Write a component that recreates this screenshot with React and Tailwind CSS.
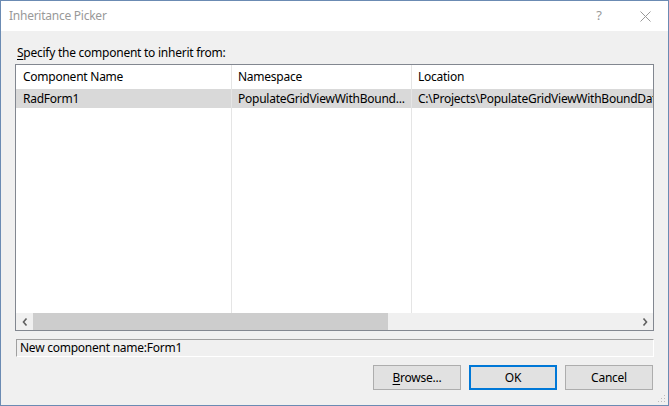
import React from "react";

const font = { fontFamily: '"Segoe UI", "Noto Sans", "Open Sans", sans-serif' };

export default function App() {
  return (
    <div
      className="relative w-[669px] h-[406px] border border-[#6b8bb3] bg-[#f0f0f0] flex flex-col text-[12px] tracking-[-0.25px] text-black overflow-hidden"
      style={font}
    >
      {/* Title bar */}
      <div className="h-[30px] bg-white flex items-center shrink-0">
        <div className="pl-[8px] text-[#999999] text-[12px] flex-1 leading-none">Inheritance Picker</div>
        <div className="w-[46px] h-[30px] flex items-center justify-center text-[#999999] text-[13px]">?</div>
        <div className="w-[46px] h-[30px] flex items-center justify-center">
          <svg width="11" height="11" viewBox="0 0 11 11">
            <path d="M0.5 0.5 L10.5 10.5 M10.5 0.5 L0.5 10.5" stroke="#999999" strokeWidth="1" />
          </svg>
        </div>
      </div>

      {/* Body */}
      <div className="flex-1 flex flex-col px-[14px]">
        <div className="pt-[14px] pl-[2px] h-[33px] leading-[16px]">
          <span className="underline underline-offset-2">S</span>pecify the component to inherit from:
        </div>

        {/* List view */}
        <div className="h-[267px] border border-[#828790] bg-white flex flex-col">
          <div className="flex-1 relative flex">
            <div className="w-[216px] border-r border-[#e5e5e5] flex flex-col">
              <div className="h-[24px] flex items-center pl-[7px]">Component Name</div>
              <div className="h-[19px] bg-[#d9d9d9] flex items-center pl-[7px]">RadForm1</div>
            </div>
            <div className="w-[180px] border-r border-[#e5e5e5] flex flex-col">
              <div className="h-[24px] flex items-center pl-[6px]">Namespace</div>
              <div className="h-[19px] bg-[#d9d9d9] flex items-center pl-[6px] whitespace-nowrap overflow-hidden">
                PopulateGridViewWithBound...
              </div>
            </div>
            <div className="flex-1 min-w-0 flex flex-col overflow-hidden">
              <div className="h-[24px] flex items-center pl-[6px]">Location</div>
              <div className="h-[19px] bg-[#d9d9d9] flex items-center pl-[6px] whitespace-nowrap overflow-hidden">
                C:\Projects\PopulateGridViewWithBoundDat
              </div>
            </div>
          </div>
          {/* horizontal scrollbar */}
          <div className="h-[17px] bg-[#f0f0f0] flex items-center shrink-0">
            <div className="w-[17px] h-[17px] flex items-center justify-center">
              <svg width="6" height="8" viewBox="0 0 6 8">
                <path d="M4.5 0.5 L1.5 4 L4.5 7.5" stroke="#606060" strokeWidth="1.6" fill="none" />
              </svg>
            </div>
            <div className="w-[355px] h-[17px] bg-[#cdcdcd]" />
            <div className="flex-1" />
            <div className="w-[17px] h-[17px] flex items-center justify-center">
              <svg width="6" height="8" viewBox="0 0 6 8">
                <path d="M1.5 0.5 L4.5 4 L1.5 7.5" stroke="#606060" strokeWidth="1.6" fill="none" />
              </svg>
            </div>
          </div>
        </div>

        {/* text box */}
        <div className="mt-[8px] ml-[1px] h-[18px] border-t border-l border-[#a0a0a0] border-b border-r border-b-white border-r-white flex items-center pl-[3px]">
          New component name:Form1
        </div>

        {/* buttons */}
        <div className="mt-[8px] flex justify-end gap-[8px] pr-[1px]">
          <button className="w-[88px] h-[25px] border border-[#adadad] bg-[#e1e1e1] flex items-center justify-center">
            <span>
              <span className="underline underline-offset-2">B</span>rowse...
            </span>
          </button>
          <button className="w-[88px] h-[25px] border-2 border-[#0078d7] bg-[#e1e1e1] flex items-center justify-center">
            OK
          </button>
          <button className="w-[88px] h-[25px] border border-[#adadad] bg-[#e1e1e1] flex items-center justify-center">
            Cancel
          </button>
        </div>
      </div>

      {/* resize grip */}
      <svg className="absolute right-[2px] bottom-[2px]" width="10" height="10" viewBox="0 0 10 10">
        <rect x="8" y="2" width="1" height="1" fill="#bcbcbc" />
        <rect x="5" y="5" width="1" height="1" fill="#bcbcbc" />
        <rect x="8" y="5" width="1" height="1" fill="#bcbcbc" />
        <rect x="2" y="8" width="1" height="1" fill="#bcbcbc" />
        <rect x="5" y="8" width="1" height="1" fill="#bcbcbc" />
        <rect x="8" y="8" width="1" height="1" fill="#bcbcbc" />
      </svg>
    </div>
  );
}
